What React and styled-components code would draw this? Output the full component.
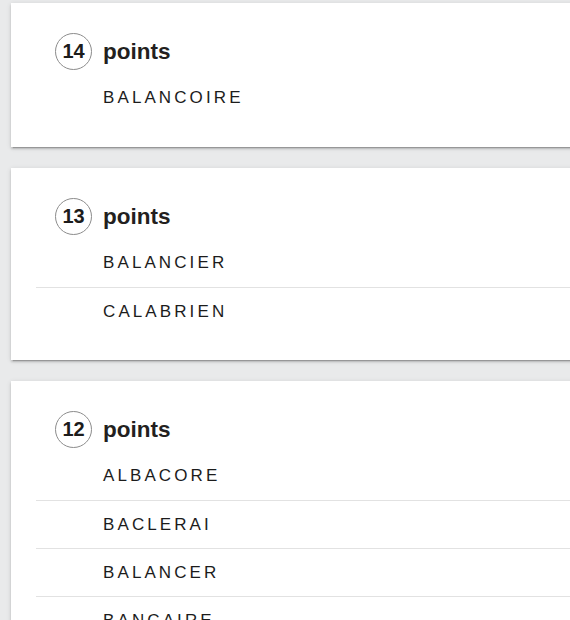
import React from 'react';
import styled, { createGlobalStyle } from 'styled-components';

const GlobalStyle = createGlobalStyle`
  html, body {
    margin: 0;
    padding: 0;
    background: #e9eaeb;
    overflow: hidden;
    font-family: "Liberation Sans", Arial, sans-serif;
    color: #222;
  }
`;

const Page = styled.div`
  display: flex;
  flex-direction: column;
  gap: 21px;
  padding: 3px 0 0 11px;
`;

const Card = styled.section`
  width: 620px;
  background: #fff;
  padding: 26px 0 25px 0;
  box-shadow: 0 3px 1px -2px rgba(0, 0, 0, 0.2), 0 2px 2px 0 rgba(0, 0, 0, 0.14),
    0 1px 5px 0 rgba(0, 0, 0, 0.12);
`;

const Header = styled.div`
  display: flex;
  align-items: center;
  gap: 11px;
  height: 45px;
  padding-left: 44px;
`;

const Score = styled.span`
  display: flex;
  align-items: center;
  justify-content: center;
  width: 35px;
  height: 35px;
  border: 1px solid #8c8c8c;
  border-radius: 50%;
  font-size: 20px;
  font-weight: 700;
  color: #1c1c1c;
`;

const Title = styled.h2`
  margin: 0;
  font-size: 22.5px;
  font-weight: 700;
  color: #231f20;
`;

const List = styled.ul`
  list-style: none;
  margin: 0 0 0 25px;
  padding: 0;
`;

const Word = styled.li`
  display: flex;
  align-items: center;
  height: 48px;
  box-sizing: border-box;
  padding-left: 67px;
  font-size: 17px;
  letter-spacing: 3.1px;
  color: #1c1c1c;
  & + & {
    border-top: 1px solid #e2e2e2;
  }
`;

const groups = [
  { score: 14, words: ['BALANCOIRE'] },
  { score: 13, words: ['BALANCIER', 'CALABRIEN'] },
  { score: 12, words: ['ALBACORE', 'BACLERAI', 'BALANCER', 'BANCAIRE'] },
];

const App = () => {
  return (
    <>
      <GlobalStyle />
      <Page>
        {groups.map((g) => (
          <Card key={g.score}>
            <Header>
              <Score>{g.score}</Score>
              <Title>points</Title>
            </Header>
            <List>
              {g.words.map((w) => (
                <Word key={w}>{w}</Word>
              ))}
            </List>
          </Card>
        ))}
      </Page>
    </>
  );
};

export default App;
